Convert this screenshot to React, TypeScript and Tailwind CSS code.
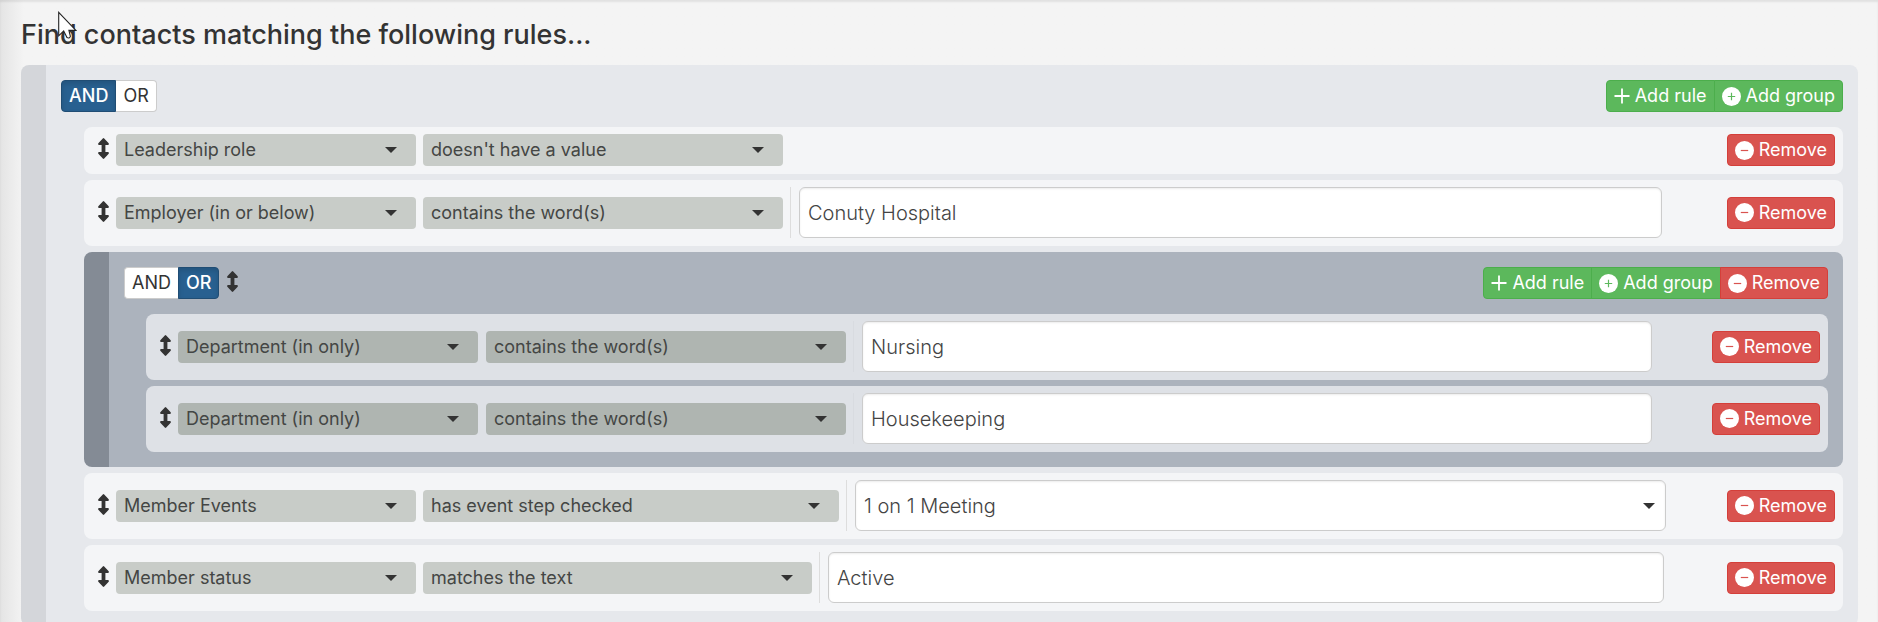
import { useId, useState } from "react";
import clsx from "clsx";

type Condition = "AND" | "OR";

interface Rule {
  field: string;
  operator: string;
  operatorWidth: string;
  value?: string;
  kind?: "text" | "select";
}

const topRules: Rule[] = [
  { field: "Leadership role", operator: "doesn't have a value", operatorWidth: "w-[360px]" },
  { field: "Employer (in or below)", operator: "contains the word(s)", operatorWidth: "w-[360px]", value: "Conuty Hospital" },
];

const nestedRules: Rule[] = [
  { field: "Department (in only)", operator: "contains the word(s)", operatorWidth: "w-[360px]", value: "Nursing" },
  { field: "Department (in only)", operator: "contains the word(s)", operatorWidth: "w-[360px]", value: "Housekeeping" },
];

const bottomRules: Rule[] = [
  { field: "Member Events", operator: "has event step checked", operatorWidth: "w-[416px]", value: "1 on 1 Meeting", kind: "select" },
  { field: "Member status", operator: "matches the text", operatorWidth: "w-[389px]", value: "Active" },
];

function SortIcon() {
  return (
    <svg viewBox="0 0 11 21" className="mb-[3px] h-[21px] w-[11px] shrink-0 fill-[#333]" aria-hidden="true">
      <path d="M5.5 0Q5.9 0 6.2 .4L10.7 5.2Q11.2 7 10 7H7.4V14H10Q11.2 14 10.7 15.8L6.2 20.6Q5.5 21.3 4.8 20.6L.3 15.8Q-.2 14 1 14H3.6V7H1Q-.2 7 .3 5.2L4.8 .4Q5.1 0 5.5 0Z" />
    </svg>
  );
}

function PlusIcon() {
  return (
    <svg viewBox="0 0 16 16" className="size-4 shrink-0" aria-hidden="true">
      <path d="M8 .5v15M.5 8h15" fill="none" stroke="currentColor" strokeWidth="1.8" />
    </svg>
  );
}

function CircleIcon({ type }: { type: "plus" | "minus" }) {
  return (
    <svg viewBox="0 0 19 19" className="size-[19px] shrink-0" aria-hidden="true">
      <circle cx="9.5" cy="9.5" r="9.5" fill="currentColor" />
      <path
        d={type === "plus" ? "M9.5 5.8v7.4M5.8 9.5h7.4" : "M5.8 9.5h7.4"}
        fill="none"
        stroke={type === "plus" ? "#5cb85c" : "#d9534f"}
        strokeWidth="1.2"
      />
    </svg>
  );
}

function Caret({ className }: { className: string }) {
  return (
    <svg
      viewBox="0 0 12 6"
      className={clsx("pointer-events-none absolute top-1/2 h-1.5 w-3 -translate-y-1/2 fill-[#333]", className)}
      aria-hidden="true"
    >
      <path d="M0 0h12L6 6Z" />
    </svg>
  );
}

function Picker({ label, value, nested, className }: { label: string; value: string; nested: boolean; className: string }) {
  return (
    <div className={clsx("relative shrink-0", className)}>
      <select
        aria-label={label}
        defaultValue={value}
        className={clsx(
          "block h-8 w-full appearance-none rounded-[4px] pr-10 pl-2 text-[18px] leading-6 text-[#444644]",
          nested ? "bg-[#afb5b1]" : "bg-[#c8ccc8]"
        )}
      >
        <option>{value}</option>
      </select>
      <Caret className="right-[19px]" />
    </div>
  );
}

const btn = "flex h-8 items-center gap-[5px] border px-[7px] text-[18px] leading-6 text-white";

function RemoveButton({ className = "rounded-[4px]" }: { className?: string }) {
  return (
    <button type="button" className={clsx(btn, "shrink-0 border-[#d43f3a] bg-[#d9534f]", className)}>
      <CircleIcon type="minus" />
      Remove
    </button>
  );
}

function RuleRow({ rule, nested = false }: { rule: Rule; nested?: boolean }) {
  const field =
    "block h-[51px] rounded-md border border-[#ccc] bg-white px-2 text-[20px] leading-6 font-light text-[#444] shadow-[inset_0_1px_2px_rgba(0,0,0,0.08)]";

  return (
    <li
      className={clsx(
        "flex items-center rounded-lg pt-[7px] pr-2 pb-2 pl-3.5",
        nested ? "bg-[#dee1e6]" : "bg-[#f4f5f7]"
      )}
    >
      <SortIcon />
      <Picker label="Field" value={rule.field} nested={nested} className="ml-[7px] w-[300px]" />
      <Picker
        label="Operator"
        value={rule.operator}
        nested={nested}
        className={clsx(nested ? "ml-2" : "ml-[7px]", rule.operatorWidth)}
      />
      {rule.value ? (
        <div className={clsx("flex-1 border-l", nested ? "ml-[7px] border-[#d8dbe0] pl-2" : "ml-[7px] border-[#ddd] pl-2")}>
          {rule.kind === "select" ? (
            <div className="relative w-[93%]">
              <select aria-label="Value" defaultValue={rule.value} className={clsx(field, "w-full appearance-none")}>
                <option>{rule.value}</option>
              </select>
              <Caret className="right-[11px]" />
            </div>
          ) : (
            <input aria-label="Value" type="text" defaultValue={rule.value} className={clsx(field, "w-[93%]")} />
          )}
        </div>
      ) : (
        <div className="flex-1" />
      )}
      <RemoveButton />
    </li>
  );
}

function ConditionToggle({ initial }: { initial: Condition }) {
  const [condition, setCondition] = useState<Condition>(initial);
  const name = useId();
  const options: Condition[] = ["AND", "OR"];

  return (
    <div className="flex text-[18px] leading-6">
      {options.map((option) => (
        <label
          key={option}
          className={clsx(
            "flex h-8 cursor-pointer items-center border px-[7px] first:rounded-l-[4px] last:rounded-r-[4px]",
            condition === option
              ? "border-[#204d74] bg-[#286090] font-medium text-white shadow-[inset_0_3px_5px_rgba(0,0,0,0.125)]"
              : "border-[#ccc] bg-white text-[#333] first:border-r-0 last:border-l-0"
          )}
        >
          <input
            type="radio"
            name={name}
            className="sr-only"
            checked={condition === option}
            onChange={() => setCondition(option)}
          />
          {option}
        </label>
      ))}
    </div>
  );
}

function GroupHeader({ condition, nested = false }: { condition: Condition; nested?: boolean }) {
  return (
    <div className="flex items-center">
      <ConditionToggle initial={condition} />
      {nested && (
        <div className="ml-2">
          <SortIcon />
        </div>
      )}
      <div className="ml-auto flex">
        <button type="button" className={clsx(btn, "rounded-l-[4px] border-[#4cae4c] bg-[#5cb85c]")}>
          <PlusIcon />
          Add rule
        </button>
        <button
          type="button"
          className={clsx(btn, "-ml-px border-[#4cae4c] bg-[#5cb85c]", !nested && "rounded-r-[4px]")}
        >
          <CircleIcon type="plus" />
          Add group
        </button>
        {nested && <RemoveButton className="-ml-px rounded-r-[4px]" />}
      </div>
    </div>
  );
}

function Pointer() {
  return (
    <svg viewBox="0 0 19 29" className="pointer-events-none absolute top-[11px] left-[58px] h-[29px] w-[19px]" aria-hidden="true">
      <path d="M.7 1.4v23.4l5-4.8q2.4 8 5.6 7.6 2.8-.8-.4-8.2h7Z" fill="#fff" />
      <path
        d="M5.7 20 9 26.6q2.4 1.2 3.4-1.2L10.9 19.4h7L.7 1.4v23.4Z"
        fill="none"
        stroke="#222"
        strokeWidth="1.1"
      />
    </svg>
  );
}

export default function App() {
  return (
    <main className="relative min-h-screen overflow-hidden bg-[#f4f4f4] bg-linear-to-r from-[#e4e4e4] to-[#f4f4f4] to-[24px] pr-5 pb-5 pl-[21px] font-['Inter',sans-serif] shadow-[inset_0_2px_2px_rgba(0,0,0,0.08)]">
      <h1 className="pt-[17px] pb-[13px] text-[27px] leading-[35px] font-medium text-[#333]">
        Find contacts matching the following rules...
      </h1>

      <section className="rounded-lg border-l-[25px] border-[#d4d6da] bg-[#e6e8ec] p-[15px]">
        <GroupHeader condition="AND" />
        <ul className="mt-[15px] ml-[23px] space-y-1.5">
          {topRules.map((rule) => (
            <RuleRow key={rule.field} rule={rule} />
          ))}
          <li className="rounded-lg border-l-[25px] border-[#848b95] bg-[#acb3bd] p-[15px]">
            <GroupHeader condition="OR" nested />
            <ul className="mt-[15px] ml-[22px] space-y-1.5">
              {nestedRules.map((rule) => (
                <RuleRow key={rule.value} rule={rule} nested />
              ))}
            </ul>
          </li>
          {bottomRules.map((rule) => (
            <RuleRow key={rule.field} rule={rule} />
          ))}
        </ul>
      </section>

      <Pointer />
    </main>
  );
}
